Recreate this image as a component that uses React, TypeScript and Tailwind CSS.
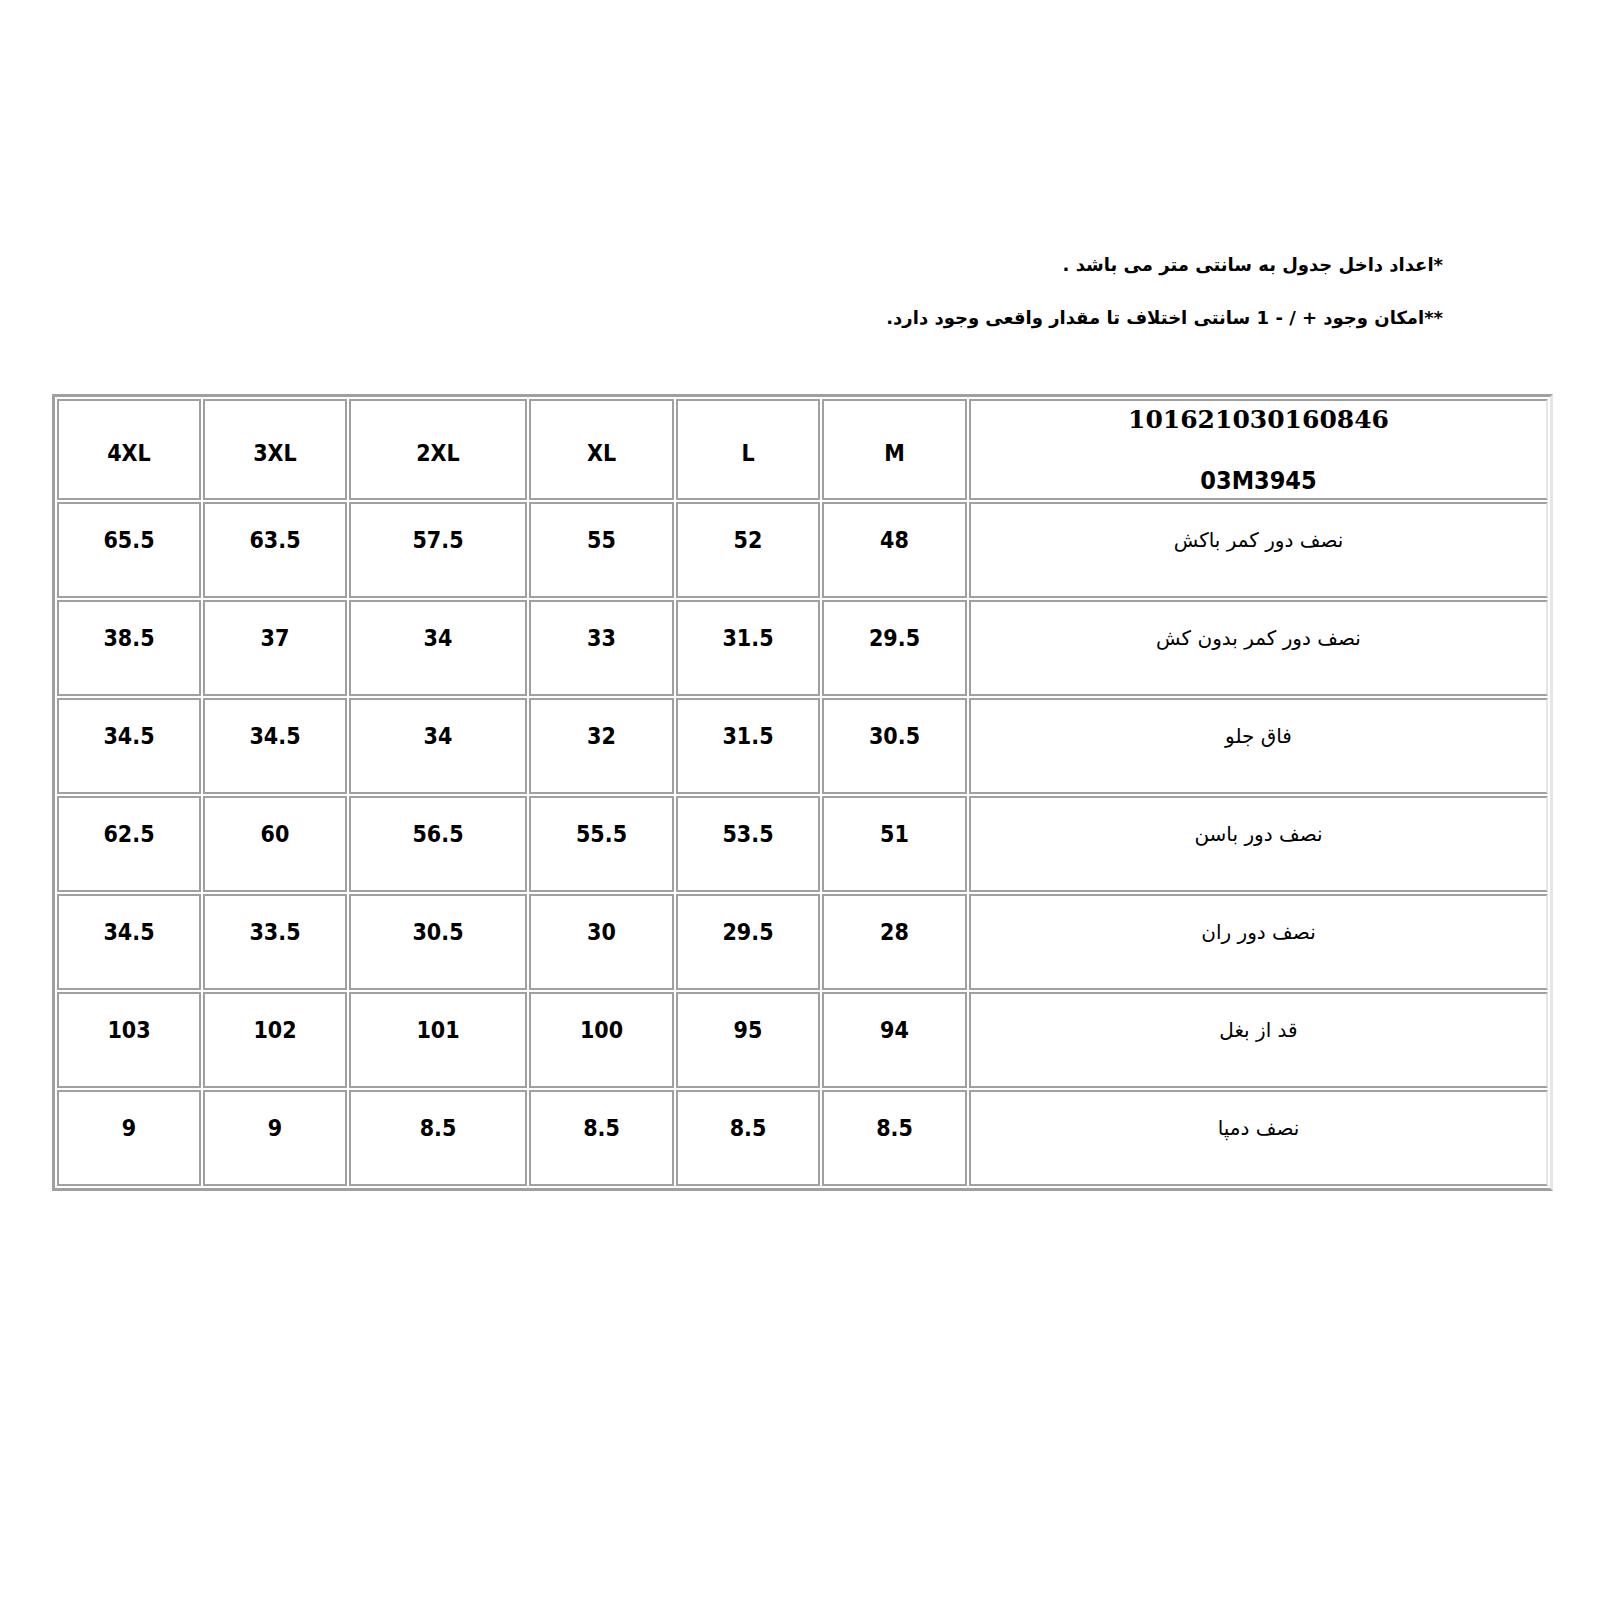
import React from "react";

type Row = {
    label: string;
    values: string[]; // 4XL, 3XL, 2XL, XL, L, M
};

const sizes = ["4XL", "3XL", "2XL", "XL", "L", "M"];

const rows: Row[] = [
    { label: "نصف دور کمر باکش", values: ["65.5", "63.5", "57.5", "55", "52", "48"] },
    { label: "نصف دور کمر بدون کش", values: ["38.5", "37", "34", "33", "31.5", "29.5"] },
    { label: "فاق جلو", values: ["34.5", "34.5", "34", "32", "31.5", "30.5"] },
    { label: "نصف دور باسن", values: ["62.5", "60", "56.5", "55.5", "53.5", "51"] },
    { label: "نصف دور ران", values: ["34.5", "33.5", "30.5", "30", "29.5", "28"] },
    { label: "قد از بغل", values: ["103", "102", "101", "100", "95", "94"] },
    { label: "نصف دمپا", values: ["9", "9", "8.5", "8.5", "8.5", "8.5"] },
];

const numFont = "font-['DejaVu_Sans_Condensed','DejaVu_Sans',sans-serif]";
const faFont = "font-['DejaVu_Sans','Noto_Sans',sans-serif]";

function App() {
    return (
        <div className="w-[1600px] h-[1600px] bg-white text-black">
            {/* notes */}
            <div dir="rtl" className={`pt-[238px] pr-[157px] ${faFont} font-bold text-[18px] leading-[53px]`}>
                <p>*اعداد داخل جدول به سانتی متر می باشد .</p>
                <p>**امکان وجود + / - 1 سانتی اختلاف تا مقدار واقعی وجود دارد.</p>
            </div>

            <div className="pl-[52px] mt-[50px]">
                <table className="w-[1501px] table-fixed border-separate border-spacing-[2px] border-[3px] border-[#a0a0a0] border-r-[#e6e6e6]">
                    <colgroup>
                        <col className="w-[144px]" />
                        <col className="w-[144px]" />
                        <col className="w-[178px]" />
                        <col className="w-[145px]" />
                        <col className="w-[144px]" />
                        <col className="w-[145px]" />
                        <col />
                    </colgroup>
                    <tbody>
                        <tr className="h-[101px]">
                            {sizes.map(s => (
                                <td key={s} className={`border-2 border-[#a0a0a0] text-center align-middle pt-[8px] ${numFont} font-bold text-[23px]`}>
                                    {s}
                                </td>
                            ))}
                            <td className="border-2 border-[#a0a0a0] border-r-[#e6e6e6] text-center align-top">
                                <div className="pt-[2px] font-['DejaVu_Serif','Liberation_Serif',serif] font-bold text-[25px] leading-[34px]">101621030160846</div>
                                <div className={`mt-[29px] ${numFont} font-bold text-[25px] leading-[30px]`}>03M3945</div>
                            </td>
                        </tr>
                        {rows.map(row => (
                            <tr key={row.label} className="h-[96px]">
                                {row.values.map((v, i) => (
                                    <td key={i} className={`border-2 border-[#a0a0a0] text-center align-middle pb-[20px] ${numFont} font-bold text-[23px]`}>
                                        {v}
                                    </td>
                                ))}
                                <td dir="rtl" className={`border-2 border-[#a0a0a0] border-r-[#e6e6e6] text-center align-middle pb-[20px] ${faFont} text-[20px]`}>
                                    {row.label}
                                </td>
                            </tr>
                        ))}
                    </tbody>
                </table>
            </div>
        </div>
    );
}

export default App;
